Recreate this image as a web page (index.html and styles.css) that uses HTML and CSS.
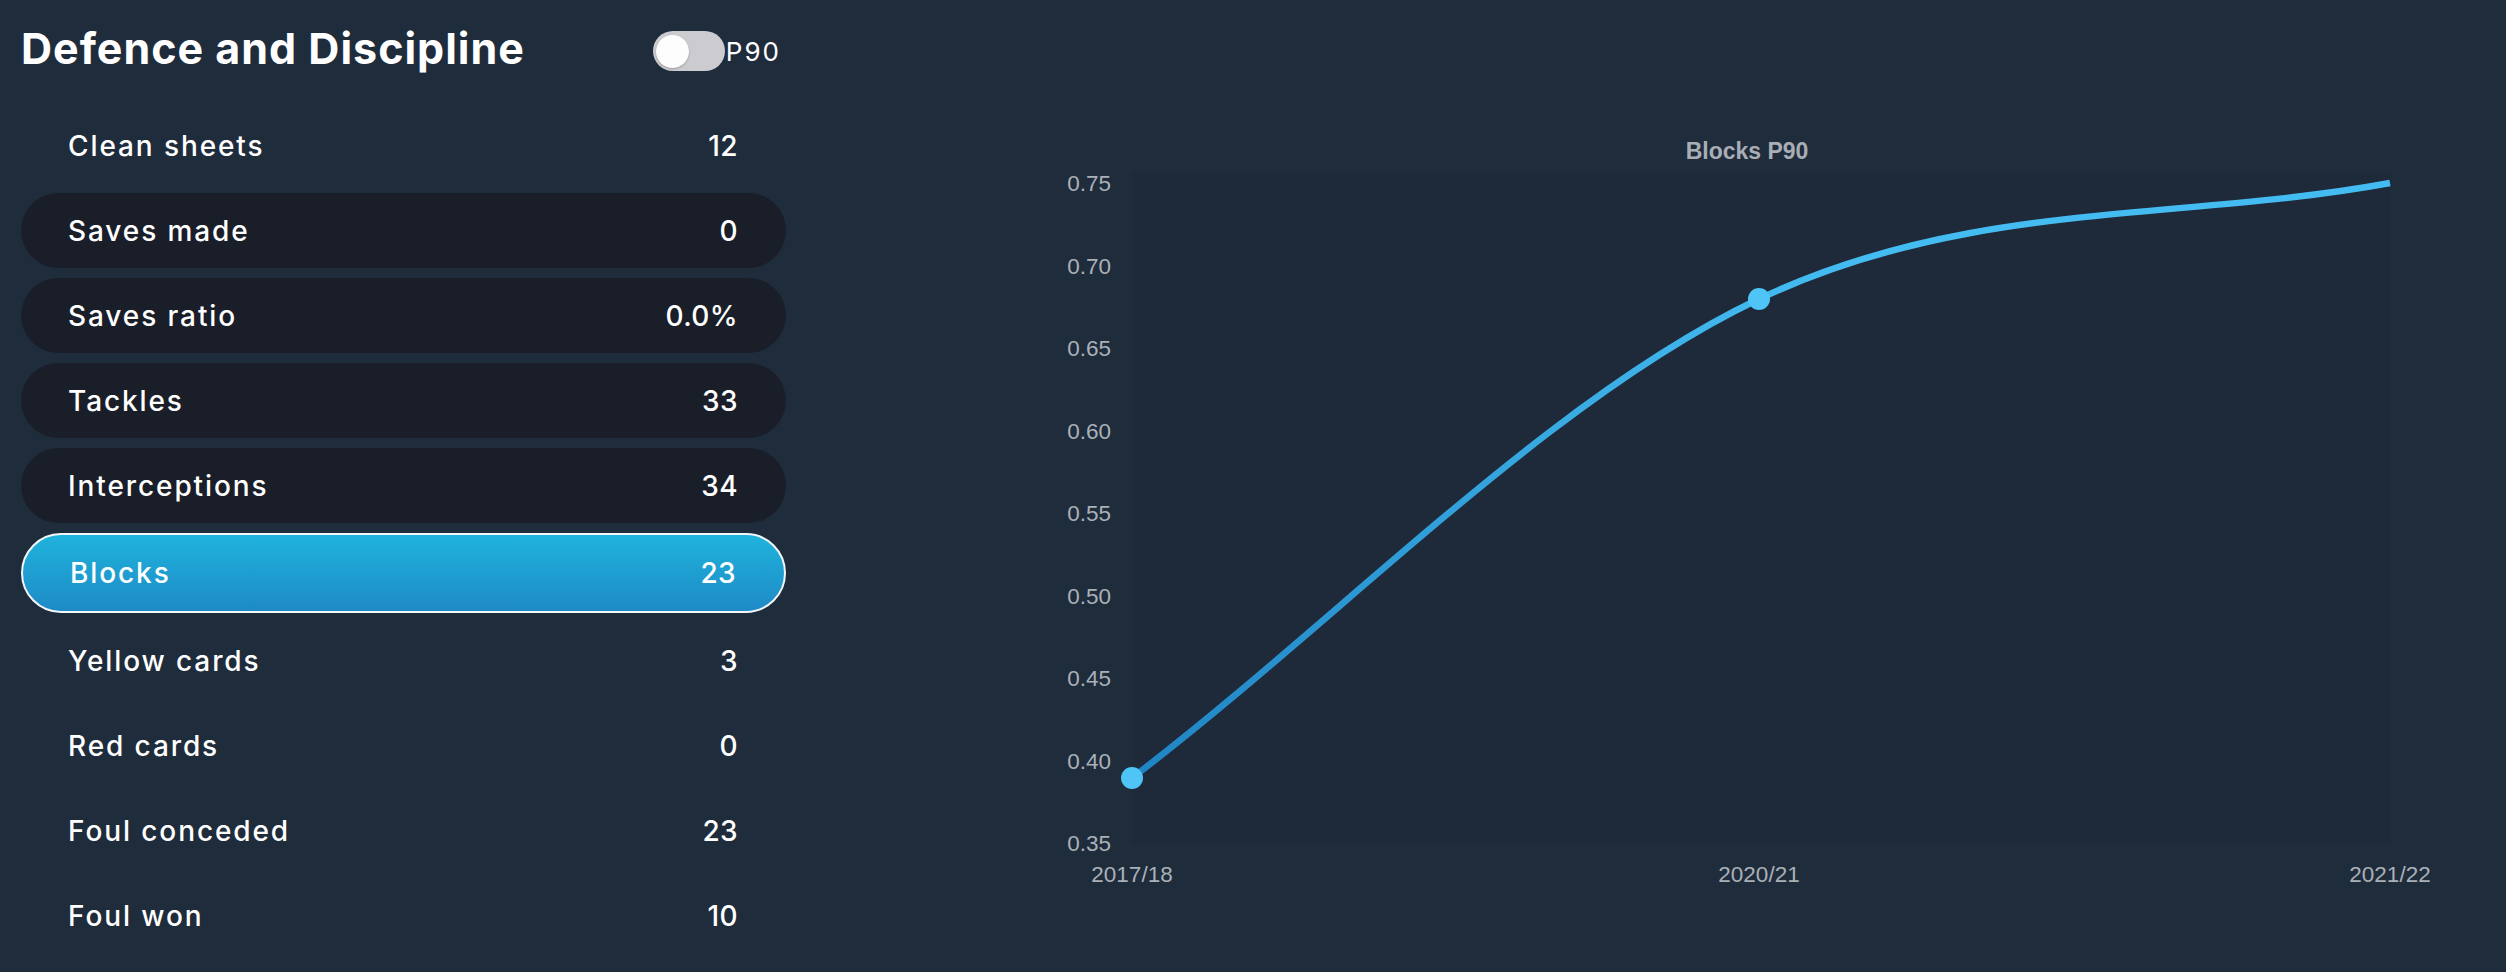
FILE: index.html
```html
<!DOCTYPE html>
<html lang="en">
<head>
    <meta charset="UTF-8">
    <meta name="viewport" content="width=device-width, initial-scale=1.0">
    <title>Defence and Discipline</title>
    <link rel="stylesheet" href="styles.css">
</head>
<body>
    <main class="wrap">
        <section class="panel">
            <header class="panel-head">
                <h1>Defence and Discipline</h1>
                <label class="p90">
                    <span class="toggle"><span class="knob"></span></span>
                    <span class="p90-text">P90</span>
                </label>
            </header>
            <ul class="stats">
                <li class="stat"><span>Clean sheets</span><span class="val">12</span></li>
                <li class="stat dark"><span>Saves made</span><span class="val">0</span></li>
                <li class="stat dark"><span>Saves ratio</span><span class="val">0.0%</span></li>
                <li class="stat dark"><span>Tackles</span><span class="val">33</span></li>
                <li class="stat dark"><span>Interceptions</span><span class="val">34</span></li>
                <li class="stat active"><span>Blocks</span><span class="val">23</span></li>
                <li class="stat"><span>Yellow cards</span><span class="val">3</span></li>
                <li class="stat"><span>Red cards</span><span class="val">0</span></li>
                <li class="stat"><span>Foul conceded</span><span class="val">23</span></li>
                <li class="stat"><span>Foul won</span><span class="val">10</span></li>
            </ul>
        </section>
        <section class="chart">
            <svg class="chart-svg" viewBox="0 0 1506 972" width="1506" height="972">
                <defs>
                    <linearGradient id="lineGrad" gradientUnits="userSpaceOnUse" x1="0" y1="778" x2="0" y2="260">
                        <stop offset="0" stop-color="#1f84c3"/>
                        <stop offset="1" stop-color="#44bcf1"/>
                    </linearGradient>
                </defs>
                <rect x="132" y="172" width="1258" height="672" fill="rgba(0,0,0,0.03)"/>
                <text class="chart-title" x="747" y="159" text-anchor="middle">Blocks P90</text>

                <g class="axis" text-anchor="end">
                    <text x="111" y="191">0.75</text>
                    <text x="111" y="273.5">0.70</text>
                    <text x="111" y="356">0.65</text>
                    <text x="111" y="438.5">0.60</text>
                    <text x="111" y="521">0.55</text>
                    <text x="111" y="603.5">0.50</text>
                    <text x="111" y="686">0.45</text>
                    <text x="111" y="768.5">0.40</text>
                    <text x="111" y="851">0.35</text>
                </g>
                <g class="axis" text-anchor="middle">
                    <text x="132" y="882">2017/18</text>
                    <text x="759" y="882">2020/21</text>
                    <text x="1390" y="882">2021/22</text>
                </g>

                <!-- monotone cubic through the three seasons -->
                <path d="M132,778 C341,618.3 550,398.1 759,299 C969.3,199.3 1179.7,221.7 1390,183" fill="none" stroke="url(#lineGrad)" stroke-width="6.5"/>
                <circle cx="132" cy="778" r="11" fill="#4ec4f7"/>
                <circle cx="759" cy="299" r="11" fill="#4ec4f7"/>
            </svg>
        </section>
    </main>
</body>
</html>
```

FILE: styles.css
```css
body {
    margin: 0;
    padding: 0;
    background-color: #1f2c3c;
    color: #fff;
    font-family: Inter, "Open Sans", sans-serif;
}
.wrap {
    display: flex;
    height: 972px;
    overflow: hidden;
}
.panel {
    width: 765px;
    margin-left: 21px;
    flex-shrink: 0;
}
.panel-head {
    display: flex;
    align-items: center;
    height: 96px;
}
.panel-head h1 {
    margin: 0;
    font-size: 43px;
    font-weight: 700;
    letter-spacing: 1px;
}
.p90 {
    display: flex;
    align-items: center;
    gap: 1px;
    margin-left: auto;
    margin-right: 5px;
    margin-top: 6px;
}
.toggle {
    display: flex;
    align-items: center;
    width: 72px;
    height: 40px;
    padding: 0 3px;
    box-sizing: border-box;
    background: #cbcbd0;
    border-radius: 20px;
}
.knob {
    width: 33px;
    height: 33px;
    border-radius: 50%;
    background: #fdfdfd;
    box-shadow: 0 1px 2px rgba(0, 0, 0, 0.25);
}
.p90-text {
    font-size: 26px;
    font-weight: 400;
    letter-spacing: 2px;
}
.stats {
    list-style: none;
    margin: 12px 0 0;
    padding: 0;
    display: flex;
    flex-direction: column;
    gap: 10px;
}
.stat {
    display: flex;
    justify-content: space-between;
    align-items: center;
    height: 75px;
    padding: 0 49px 0 47px;
    border-radius: 40px;
    box-sizing: border-box;
    font-size: 28px;
    font-weight: 500;
    letter-spacing: 1.9px;
}
.stat .val {
    letter-spacing: 0.4px;
    margin-right: -1px;
}
.stat.dark {
    background: #1a1e29;
}
.stat.active {
    height: 80px;
    border: 2px solid #f4f7fa;
    background: linear-gradient(to bottom, #1fb3dc, #1e8ac6);
}
.chart {
    margin-left: 214px;
    flex-shrink: 0;
}
.chart-svg {
    display: block;
}
.chart-title {
    font-family: "Liberation Sans", Arial, sans-serif;
    font-weight: 700;
    font-size: 23px;
    fill: #a9aeb6;
}
.axis text {
    font-family: "Liberation Sans", Arial, sans-serif;
    font-size: 22.5px;
    fill: #aab0b8;
}
```
